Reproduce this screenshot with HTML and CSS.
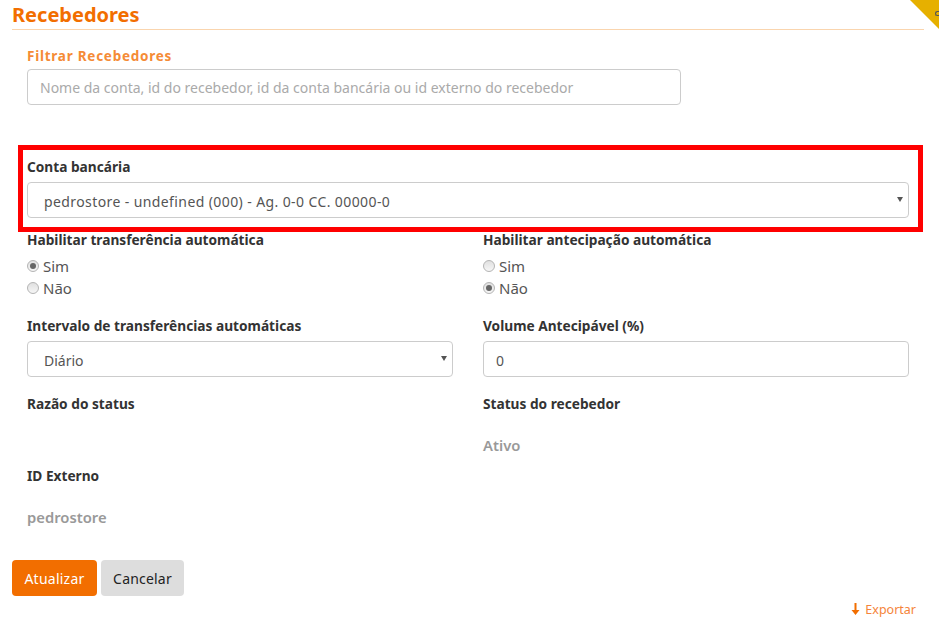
FILE: index.html
```html
<!DOCTYPE html>
<html lang="pt">
<head>
<meta charset="utf-8">
<title>Recebedores</title>
<link rel="stylesheet" href="styles.css">
</head>
<body>
<div class="corner"><span class="corner-glyph"></span></div>
<main class="page">
  <h1 class="title">Recebedores</h1>
  <section class="filter">
    <label class="filter-label">Filtrar Recebedores</label>
    <input class="control filter-input" type="text" placeholder="Nome da conta, id do recebedor, id da conta bancária ou id externo do recebedor">
  </section>
  <section class="highlight">
    <label class="label">Conta bancária</label>
    <div class="control select">pedrostore - undefined (000) - Ag. 0-0 CC. 00000-0</div>
  </section>
  <section class="grid">
    <div class="cell cell-radio">
      <label class="label">Habilitar transferência automática</label>
      <div class="radio"><span class="dot on"></span>Sim</div>
      <div class="radio"><span class="dot"></span>Não</div>
    </div>
    <div class="cell cell-radio">
      <label class="label">Habilitar antecipação automática</label>
      <div class="radio"><span class="dot"></span>Sim</div>
      <div class="radio"><span class="dot on"></span>Não</div>
    </div>
    <div class="cell cell-control">
      <label class="label">Intervalo de transferências automáticas</label>
      <div class="control select">Diário</div>
    </div>
    <div class="cell cell-control">
      <label class="label">Volume Antecipável (%)</label>
      <div class="control number">0</div>
    </div>
    <div class="cell cell-static">
      <label class="label">Razão do status</label>
    </div>
    <div class="cell cell-static">
      <label class="label">Status do recebedor</label>
      <div class="static">Ativo</div>
    </div>
    <div class="cell cell-static">
      <label class="label">ID Externo</label>
      <div class="static">pedrostore</div>
    </div>
  </section>
  <div class="actions">
    <button class="btn primary">Atualizar</button>
    <button class="btn secondary">Cancelar</button>
  </div>
  <div class="export">
    <svg class="export-icon" width="9" height="12" viewBox="0 0 9 12"><path d="M3.5 0h2v7h3L4.5 12 .5 7h3z" fill="#f26e00"/></svg>
    <span>Exportar</span>
  </div>
</main>
</body>
</html>
```
FILE: styles.css
```css
* { box-sizing: border-box; }
html, body { margin: 0; height: 100%; overflow: hidden; background: #fff; }
body { font-family: "Noto Sans", "Open Sans", sans-serif; color: #333; position: relative; }
.corner {
  position: absolute; top: 0; right: 0; width: 29px; height: 29px;
  background: #e6b000; clip-path: polygon(0 0, 100% 0, 100% 100%);
}
.corner-glyph {
  position: absolute; right: 0; top: 11px; width: 4px; height: 5px;
  border: 1.5px solid #555; border-right: 0; border-radius: 3px 0 0 3px;
}
.page { width: 924px; padding-left: 12px; }
.title {
  margin: 0; height: 30px; font-size: 20px; line-height: 29px; font-weight: 700;
  color: #f26e00; border-bottom: 1px solid #fad5ae;
}
.filter { padding: 17px 15px 0; height: 115px; }
.filter-label {
  display: block; font-size: 13.5px; line-height: 18px; font-weight: 700; color: #f58b36;
  letter-spacing: .75px; margin-bottom: 4px;
}
.control {
  display: block; height: 36px; border: 1px solid #ccc; border-radius: 4px;
  font-family: inherit; font-size: 14px; line-height: 36px; padding: 1px 12px 0; background: #fff; color: #555;
}
.filter-input { width: 654px; outline: 0; line-height: 34px; padding: 0 12px; }
.filter-input::placeholder { color: #aaa; opacity: 1; }
.highlight {
  width: 905px; height: 87px; margin-left: 6px; border: 5px solid #f00; padding: 8px 4px 0;
}
.label {
  display: block; font-size: 13.7px; line-height: 18px; font-weight: 700; color: #333; margin-bottom: 6px;
}
.select { position: relative; padding-left: 16px; }
.select::after {
  content: ""; position: absolute; right: 5px; top: 14px;
  border: 3px solid transparent; border-top: 5px solid #555; border-bottom: 0;
}
.highlight .select { width: 882px; letter-spacing: .4px; }
.grid {
  display: grid; grid-template-columns: 426px 426px; column-gap: 30px; padding: 0 15px;
}
.cell-radio { height: 86px; margin-top: -1px; }
.cell-control { height: 78px; }
.cell-static { height: 72px; }
.cell-radio .label { margin-bottom: 6px; }
.radio {
  display: flex; align-items: center; gap: 4px; height: 22px; font-size: 15px; color: #555;
}
.dot {
  width: 12px; height: 12px; border-radius: 50%; border: 1px solid #b4b4b4;
  background: linear-gradient(#e0e0e0, #f6f6f6); position: relative;
}
.dot.on::after {
  content: ""; position: absolute; left: 2px; top: 2px; width: 6px; height: 6px; border-radius: 50%; background: #666;
}
.static { margin-top: 22px; font-size: 14.8px; font-weight: 600; line-height: 20px; color: #999; }
.actions { display: flex; gap: 4px; margin-top: 21px; }
.btn {
  height: 36px; border: 0; border-radius: 4px; font-family: inherit; font-size: 14px; padding: 0;
}
.primary { width: 85px; background: #f26e00; color: #fff; letter-spacing: .25px; }
.secondary { width: 83px; background: #ddd; color: #222; letter-spacing: .2px; }
.export {
  display: flex; justify-content: flex-end; align-items: center; gap: 5px; width: 904px;
  margin-top: 4px; height: 18px; font-size: 12.5px; color: #f5843a;
}
```
